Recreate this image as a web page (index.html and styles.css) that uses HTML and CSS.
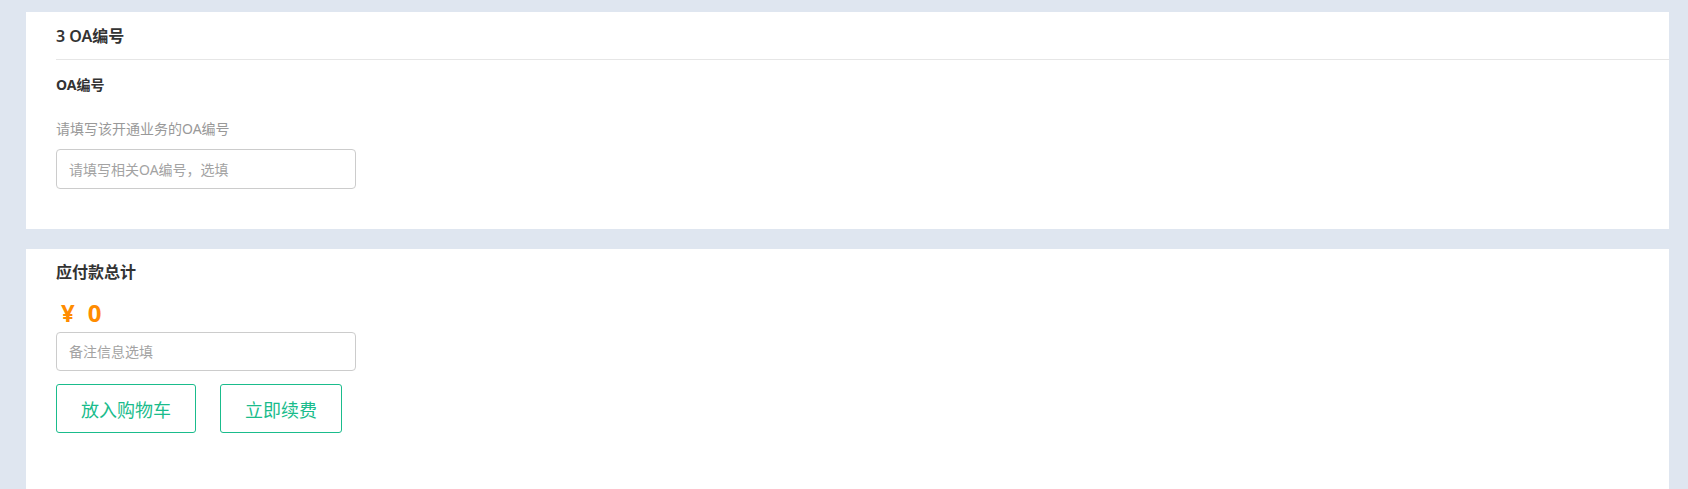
FILE: index.html
```html
<!DOCTYPE html>
<html lang="zh-CN">
<head>
<meta charset="utf-8">
<title>OA编号</title>
<link rel="stylesheet" href="styles.css">
</head>
<body>
<div class="page">
  <section class="card card-oa">
    <div class="card-head">3 OA编号</div>
    <div class="card-body">
      <div class="field-label">OA编号</div>
      <div class="field-hint">请填写该开通业务的OA编号</div>
      <input class="text-input" type="text" placeholder="请填写相关OA编号，选填">
    </div>
  </section>
  <section class="card card-total">
    <div class="total-title">应付款总计</div>
    <div class="total-price"><span class="currency">¥</span><span class="amount">0</span></div>
    <input class="text-input remark" type="text" placeholder="备注信息选填">
    <div class="actions">
      <button class="btn" type="button">放入购物车</button>
      <button class="btn" type="button">立即续费</button>
    </div>
  </section>
</div>
</body>
</html>
```

FILE: styles.css
```css
* { box-sizing: border-box; }
html, body {
  margin: 0;
  padding: 0;
  background: #dfe6f0;
  font-family: "Noto Sans", "Noto Sans CJK SC", sans-serif;
  color: #333;
}
.page {
  min-height: 100vh;
  padding: 12px 19px 0 26px;
  display: flex;
  flex-direction: column;
  gap: 20px;
}
.card {
  background: #fff;
}
.card-head {
  margin-left: 30px;
  height: 48px;
  line-height: 48px;
  font-size: 16px;
  font-weight: 600;
  color: #333;
  border-bottom: 1px solid #e6e6e6;
}
.card-body {
  padding: 15px 30px 40px;
  display: flex;
  flex-direction: column;
  align-items: flex-start;
}
.field-label {
  font-size: 14px;
  line-height: 20px;
  font-weight: 700;
  color: #333;
}
.field-hint {
  margin-top: 24px;
  font-size: 14px;
  line-height: 20px;
  color: #999;
}
.text-input {
  margin-top: 10px;
  width: 300px;
  height: 40px;
  padding: 0 12px;
  border: 1px solid #cccccc;
  border-radius: 4px;
  font-family: inherit;
  font-size: 14px;
  color: #333;
  outline: none;
  background: #fff;
}
.text-input::placeholder {
  color: #a3a3a3;
}
.card-total {
  flex: 1;
  padding: 13px 30px 40px;
  display: flex;
  flex-direction: column;
  align-items: flex-start;
}
.total-title {
  font-size: 16px;
  line-height: 20px;
  font-weight: 600;
  color: #333;
}
.total-price {
  margin-top: 16px;
  padding-left: 5px;
  display: flex;
  gap: 13px;
  font-size: 24px;
  line-height: 30px;
  font-weight: 700;
  color: #ff8c00;
}
.text-input.remark {
  margin-top: 4px;
  height: 39px;
}
.actions {
  margin-top: 13px;
  display: flex;
  gap: 24px;
}
.btn {
  height: 49px;
  padding: 0 24px;
  border: 1px solid #1abc8c;
  border-radius: 3px;
  background: #fff;
  color: #1abc8c;
  font-family: inherit;
  font-size: 18px;
  cursor: pointer;
}
```
